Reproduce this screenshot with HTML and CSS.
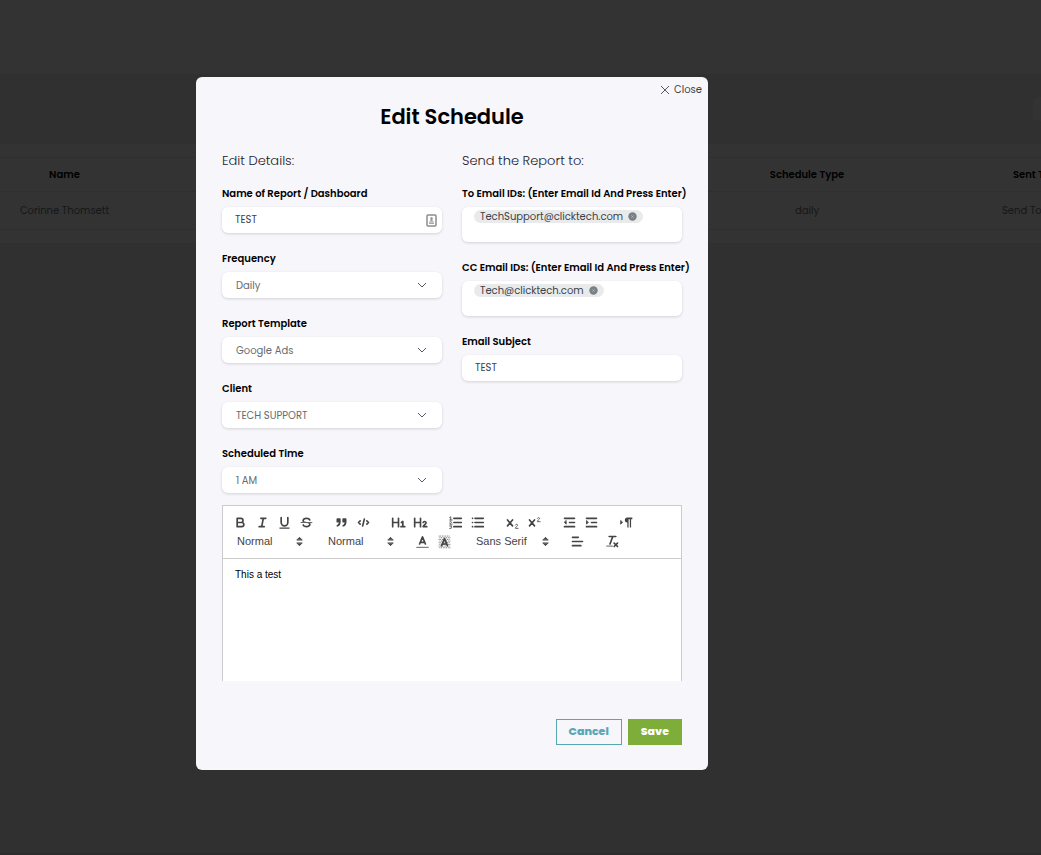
FILE: index.html
```html
<!DOCTYPE html>
<html lang="en">
<head>
<meta charset="utf-8">
<title>Edit Schedule</title>
<link rel="stylesheet" href="styles.css">
</head>
<body>
<div class="page">
  <header class="topbar"></header>
  <div class="filters"><input class="search" type="search" aria-label="Search"></div>
  <main class="panel">
    <table class="schedules">
      <thead>
        <tr><th class="col-name">Name</th><th></th><th class="col-type">Schedule Type</th><th class="col-sent head">Sent To</th></tr>
      </thead>
      <tbody>
        <tr><td>Corinne Thomsett</td><td></td><td>daily</td><td class="col-sent">Send To</td></tr>
      </tbody>
    </table>
  </main>
</div>

<div class="overlay">
  <form class="modal" role="dialog" aria-labelledby="title">
    <button class="close" type="button">
      <svg viewBox="0 0 10 10" width="10" height="10"><path d="M1 1l8 8M9 1L1 9"/></svg>
      Close
    </button>
    <h1 class="title" id="title">Edit Schedule</h1>
    <div class="columns">
      <section class="column">
        <h2 class="section">Edit Details:</h2>
        <div class="field">
          <label for="name">Name of Report / Dashboard</label>
          <div class="control">
            <input class="box" id="name" type="text" value="TEST">
            <svg class="card" viewBox="0 0 11 13" width="11" height="13"><rect x="1" y="1" width="9" height="11" rx="1" fill="none" stroke="#8c8c8c" stroke-width="1.5"/><circle cx="5.5" cy="4.6" r="1.3"/><path d="M3 7.400q2.500-3 5 0zM3 8.600h5v1.200H3z"/></svg>
          </div>
        </div>
        <div class="field">
          <label for="frequency">Frequency</label>
          <div class="control">
            <select class="box" id="frequency"><option>Daily</option></select>
            <svg class="chevron" viewBox="0 0 10 6" width="10" height="6"><path d="M1 1l4 4 4-4"/></svg>
          </div>
        </div>
        <div class="field">
          <label for="template">Report Template</label>
          <div class="control">
            <select class="box" id="template"><option>Google Ads</option></select>
            <svg class="chevron" viewBox="0 0 10 6" width="10" height="6"><path d="M1 1l4 4 4-4"/></svg>
          </div>
        </div>
        <div class="field">
          <label for="client">Client</label>
          <div class="control">
            <select class="box" id="client"><option>TECH SUPPORT</option></select>
            <svg class="chevron" viewBox="0 0 10 6" width="10" height="6"><path d="M1 1l4 4 4-4"/></svg>
          </div>
        </div>
        <div class="field">
          <label for="time">Scheduled Time</label>
          <div class="control">
            <select class="box" id="time"><option>1 AM</option></select>
            <svg class="chevron" viewBox="0 0 10 6" width="10" height="6"><path d="M1 1l4 4 4-4"/></svg>
          </div>
        </div>
      </section>
      <section class="column">
        <h2 class="section">Send the Report to:</h2>
        <div class="field">
          <label for="to">To Email IDs: (Enter Email Id And Press Enter)</label>
          <div class="tags">
            <span class="chip">TechSupport@clicktech.com
              <button class="remove" type="button" aria-label="Remove TechSupport@clicktech.com"><svg viewBox="0 0 9 9" width="9" height="9"><circle cx="4.5" cy="4.5" r="4.2"/><path d="M3.500 3.500l2 2M5.500 3.500l-2 2"/></svg></button>
            </span>
            <input class="tag-input" id="to" type="email">
          </div>
        </div>
        <div class="field">
          <label for="cc">CC Email IDs: (Enter Email Id And Press Enter)</label>
          <div class="tags">
            <span class="chip">Tech@clicktech.com
              <button class="remove" type="button" aria-label="Remove Tech@clicktech.com"><svg viewBox="0 0 9 9" width="9" height="9"><circle cx="4.5" cy="4.5" r="4.2"/><path d="M3.500 3.500l2 2M5.500 3.500l-2 2"/></svg></button>
            </span>
            <input class="tag-input" id="cc" type="email">
          </div>
        </div>
        <div class="field">
          <label for="subject">Email Subject</label>
          <input class="box" id="subject" type="text" value="TEST">
        </div>
      </section>
    </div>

    <div class="editor">
      <div class="toolbar" role="toolbar" aria-label="Formatting">
        <div class="group">
          <button class="tool" type="button" aria-label="Bold"><svg viewBox="0 0 18 18"><path d="M5 4h4.500a2.500 2.500 0 0 1 0 5H5zM5 9h5.500a2.500 2.500 0 0 1 0 5H5z"/></svg></button>
          <button class="tool" type="button" aria-label="Italic"><svg viewBox="0 0 18 18"><path d="M7 4h6M5 14h6M8 14l2-10"/></svg></button>
          <button class="tool" type="button" aria-label="Underline"><svg viewBox="0 0 18 18"><path d="M5 3v6a4 4 0 0 0 8 0V3"/><rect class="fill" x="3" y="15" width="12" height="1.500"/></svg></button>
          <button class="tool" type="button" aria-label="Strike"><svg viewBox="0 0 18 18"><path class="thin" d="M2.500 9h13"/><path class="fill" d="M9.007,8C6.542,7.791,6,7.519,6,6.500,6,5.792,7.283,5,9,5c1.571,0,2.765.679,2.969,1.309a1,1,0,0,0,1.900-.617C13.356,4.106,11.354,3,9,3,6.200,3,4,4.538,4,6.500a3.200,3.200,0,0,0,.5,1.843ZM8.984,10C11.457,10.208,12,10.479,12,11.500c0,.708-1.283,1.500-3,1.500-1.571,0-2.765-.679-2.969-1.309a1,1,0,1,0-1.900.617C4.644,13.894,6.646,15,9,15c2.800,0,5-1.538,5-3.500a3.200,3.200,0,0,0-.5-1.843Z"/></svg></button>
        </div>
        <div class="group">
          <button class="tool" type="button" aria-label="Quote"><svg viewBox="0 0 18 18"><path class="solid" d="M4 5h3v3H4zM11 5h3v3h-3zM7 8c0 4-3 5-3 5M14 8c0 4-3 5-3 5"/></svg></button>
          <button class="tool" type="button" aria-label="Code"><svg viewBox="0 0 18 18"><path d="M5 7L3 9l2 2M13 7l2 2-2 2M10 5L8 13"/></svg></button>
        </div>
        <div class="group">
          <button class="tool" type="button" aria-label="Heading 1"><svg viewBox="0 0 18 18"><path d="M2 4v10M9 4v10M2 9h7M12.500 9l1.700-1.200V14M12 14h4.500"/></svg></button>
          <button class="tool" type="button" aria-label="Heading 2"><svg viewBox="0 0 18 18"><path d="M2 4v10M9 4v10M2 9h7M12.200 9c.6-1.700 3.600-1.500 3.500.4 0 1.600-3 2.600-3.500 4.600h4.300"/></svg></button>
        </div>
        <div class="group">
          <button class="tool" type="button" aria-label="Numbered list"><svg viewBox="0 0 18 18"><path d="M7 4h9M7 9h9M7 14h9"/><path class="thin" d="M2 3l1.300-.8V6M2 6h3M2 8.300c1-1 2.500-.4 2 .6L2 11h3M2 13h2.500L3.200 14.500c2 0 1.500 2.300-1.200 1.700"/></svg></button>
          <button class="tool" type="button" aria-label="Bullet list"><svg viewBox="0 0 18 18"><path d="M6 4h10M6 9h10M6 14h10M3 4h.1M3 9h.1M3 14h.1"/></svg></button>
        </div>
        <div class="group">
          <button class="tool" type="button" aria-label="Subscript"><svg viewBox="0 0 18 18"><path d="M3 6l6 7M9 6l-6 7"/><path class="thin" d="M12.500 12c.6-1.500 3-1 2.500.5-.3 1-2.500 1.700-2.500 3.500h3.300"/></svg></button>
          <button class="tool" type="button" aria-label="Superscript"><svg viewBox="0 0 18 18"><path d="M3 6l6 7M9 6l-6 7"/><path class="thin" d="M12.500 4c.6-1.500 3-1 2.500.5-.3 1-2.500 1.700-2.500 3.500h3.300"/></svg></button>
        </div>
        <div class="group">
          <button class="tool" type="button" aria-label="Outdent"><svg viewBox="0 0 18 18"><path d="M3 4h12M3 14h12M9 9h6"/><path class="solid thin" d="M5 7v4L3 9z"/></svg></button>
          <button class="tool" type="button" aria-label="Indent"><svg viewBox="0 0 18 18"><path d="M3 4h12M3 14h12M9 9h6"/><path class="solid thin" d="M3 7v4l2-2z"/></svg></button>
        </div>
        <div class="group">
          <button class="tool" type="button" aria-label="Text direction"><svg viewBox="0 0 18 18"><path class="solid thin" d="M2 7v4l2-2z"/><path class="fill" d="M10 3a3 3 0 0 0 0 6v6h1.500V5H13v10h1.500V5H16V3z"/></svg></button>
        </div>
        <div class="group">
          <div class="picker">
            <select aria-label="Heading"><option>Normal</option></select>
            <svg viewBox="0 0 18 18"><path class="solid thin" d="M6 11l3 3 3-3zM6 7l3-3 3 3z"/></svg>
          </div>
        </div>
        <div class="group">
          <div class="picker">
            <select aria-label="Size"><option>Normal</option></select>
            <svg viewBox="0 0 18 18"><path class="solid thin" d="M6 11l3 3 3-3zM6 7l3-3 3 3z"/></svg>
          </div>
        </div>
        <div class="group">
          <button class="tool" type="button" aria-label="Text color"><svg viewBox="0 0 18 18"><path d="M5.500 12L9 3.500l3.500 8.500M6.500 10h5"/><path class="thin" d="M2 16h14"/></svg></button>
          <button class="tool" type="button" aria-label="Background color"><svg viewBox="0 0 18 18"><path class="checks" d="M2 2.500h14M3 4.500h13M2 6.500h14M3 8.500h13M2 10.500h14M3 12.500h13M2 14.500h14M3 16.500h13"/><path d="M5.500 14L9 5.500l3.500 8.500M6.500 12h5"/></svg></button>
        </div>
        <div class="group">
          <div class="picker font">
            <select aria-label="Font"><option>Sans Serif</option></select>
            <svg viewBox="0 0 18 18"><path class="solid thin" d="M6 11l3 3 3-3zM6 7l3-3 3 3z"/></svg>
          </div>
        </div>
        <div class="group">
          <button class="tool" type="button" aria-label="Align"><svg viewBox="0 0 18 18"><path d="M3 4h7M3 9h12M3 14h10"/></svg></button>
        </div>
        <div class="group">
          <button class="tool" type="button" aria-label="Clear formatting"><svg viewBox="0 0 18 18"><path d="M5 3h8M6 12L9.350 3M11 11l4 4M15 11l-4 4"/><path class="thin" d="M2 14.500h7"/></svg></button>
        </div>
      </div>
      <div class="content" contenteditable="true" role="textbox" aria-label="Email body">This a test</div>
    </div>

    <div class="actions">
      <button class="btn cancel" type="button">Cancel</button>
      <button class="btn save" type="submit">Save</button>
    </div>
  </form>
</div>
</body>
</html>
```

FILE: styles.css
```css
* {
  box-sizing: border-box;
}

body {
  margin: 0;
  overflow: hidden;
  background: #eeeef5;
  color: #3c4248;
  font-family: Poppins, Inter, "Open Sans", sans-serif;
  font-size: 10px;
}

button,
input,
select {
  font: inherit;
  color: inherit;
}

button {
  padding: 0;
  border: 0;
  background: none;
  cursor: pointer;
}

/* Schedule list behind the dialog */
.page {
  min-height: 100vh;
  overflow: hidden;
  border-bottom: 2px solid #dcdcdc;
}

.topbar {
  height: 74px;
  background: #fff;
}

.filters {
  display: flex;
  justify-content: flex-end;
  height: 70px;
  padding-top: 23px;
}

.search {
  flex: none;
  width: 160px;
  height: 24px;
  margin-right: -152px;
  border: 0;
  border-radius: 6px;
  background: #fff;
}

.panel {
  padding: 13px 0;
  overflow: hidden;
  background: #fff;
}

.schedules {
  width: 1128px;
  table-layout: fixed;
  border-collapse: collapse;
  text-align: center;
}

.schedules tr {
  border: solid #eaeaee;
  border-width: 1px 0;
}

.schedules th {
  height: 34px;
  padding: 0;
  color: #000;
  font-weight: 600;
}

.schedules td {
  height: 38px;
  padding: 0;
  color: #6f747b;
}

.schedules .col-name {
  width: 129px;
}

.schedules .col-type {
  width: 258px;
}

.schedules .col-sent {
  width: 192px;
  padding-left: 66px;
  text-align: left;
}

.schedules .head {
  padding-left: 77px;
}

/* Dialog */
.overlay {
  position: fixed;
  inset: 0;
  display: flex;
  justify-content: center;
  align-items: flex-start;
  padding: 77px 137px 0 0;
  overflow: auto;
  background: rgba(0, 0, 0, 0.8);
}

.modal {
  display: flex;
  flex-direction: column;
  width: 100%;
  max-width: 512px;
  padding: 6px 26px 25px;
  border-radius: 6px;
  background: #f6f6fb;
}

.close {
  display: flex;
  align-items: center;
  align-self: flex-end;
  gap: 4px;
  height: 14px;
  margin-right: -20px;
}

.close svg,
.chevron {
  fill: none;
  stroke: #555b63;
  stroke-width: 1;
}

.title {
  margin: 4px 0 28px;
  color: #000;
  font-size: 21px;
  font-weight: 600;
  line-height: 32px;
  text-align: center;
}

.columns {
  display: grid;
  grid-template-columns: 1fr 1fr;
  gap: 20px;
}

.column {
  display: flex;
  flex-direction: column;
  gap: 18px;
  min-width: 0;
}

.section {
  margin: -9px 0 -2px;
  color: #1c2026;
  font-size: 13px;
  font-weight: 300;
  line-height: 18px;
}

.field {
  display: flex;
  flex-direction: column;
  gap: 6px;
}

.field label {
  color: #000;
  font-weight: 600;
  line-height: 15px;
  white-space: nowrap;
}

.control {
  display: grid;
  align-items: center;
}

.control > * {
  grid-area: 1 / 1;
}

.box,
.tags {
  width: 100%;
  border: 0;
  border-radius: 6px;
  background: #fff;
  box-shadow: 0 1px 3px rgba(0, 0, 0, 0.15);
}

.box {
  height: 26px;
  padding: 0 13px;
  appearance: none;
}

select.box {
  padding: 0 14px;
  color: #666b70;
}

.chevron {
  justify-self: end;
  margin-right: 15px;
  pointer-events: none;
}

.card {
  justify-self: end;
  margin-right: 5px;
  fill: #8c8c8c;
}

.tags {
  display: flex;
  flex-direction: column;
  align-items: flex-start;
  height: 35px;
  padding: 3px 12px;
}

.chip {
  display: flex;
  align-items: center;
  gap: 5px;
  height: 13px;
  padding: 0 6px;
  border-radius: 7px;
  background: #e9eaec;
  line-height: 13px;
}

.remove {
  display: flex;
}

.remove svg {
  fill: #7b8087;
  stroke: #b4b8bd;
  stroke-width: 1;
}

.remove circle {
  stroke: none;
}

.tag-input {
  width: 100%;
  height: 14px;
  padding: 0;
  border: 0;
  outline: 0;
  background: none;
}

/* Rich text editor */
.editor {
  margin-top: 12px;
  border: 1px solid #ccc;
  border-bottom: 0;
  background: #fff;
  font-family: "Liberation Sans", Arial, sans-serif;
}

.toolbar {
  display: flex;
  flex-wrap: wrap;
  column-gap: 13px;
  padding: 7px 6px;
  border-bottom: 1px solid #ccc;
  font-size: 11px;
}

.group {
  display: flex;
  height: 19px;
}

.tool {
  display: flex;
  align-items: center;
  justify-content: center;
  width: 22px;
}

.toolbar svg {
  width: 15px;
  height: 15px;
  fill: none;
  stroke: #444;
  stroke-width: 2;
  stroke-linecap: round;
  stroke-linejoin: round;
}

.toolbar .thin {
  stroke-width: 1;
}

.toolbar .solid {
  fill: #444;
}

.toolbar .fill {
  fill: #444;
  stroke: none;
}

.toolbar .checks {
  stroke-width: 1;
  stroke-linecap: butt;
  stroke-dasharray: 1 1;
}

.picker {
  display: grid;
  align-items: center;
  width: 78px;
}

.picker.font {
  width: 85px;
}

.picker > * {
  grid-area: 1 / 1;
}

.picker select {
  width: 100%;
  height: 19px;
  padding: 0 0 2px 8px;
  border: 0;
  background: none;
  color: #444;
  appearance: none;
}

.picker svg {
  justify-self: end;
  pointer-events: none;
}

.content {
  height: 122px;
  padding: 9px 12px;
  color: #000;
  line-height: 14px;
  outline: 0;
}

/* Footer buttons */
.actions {
  display: flex;
  justify-content: flex-end;
  gap: 6px;
  margin-top: 38px;
}

.btn {
  height: 26px;
  padding: 0 12px 1px;
  border: 1px solid;
  font-size: 11px;
  font-weight: 800;
}

.cancel {
  border-color: #55a8b0;
  color: #5aa7b4;
}

.save {
  border-color: #7fad3a;
  background: #7fad3a;
  color: #fff;
}
```
